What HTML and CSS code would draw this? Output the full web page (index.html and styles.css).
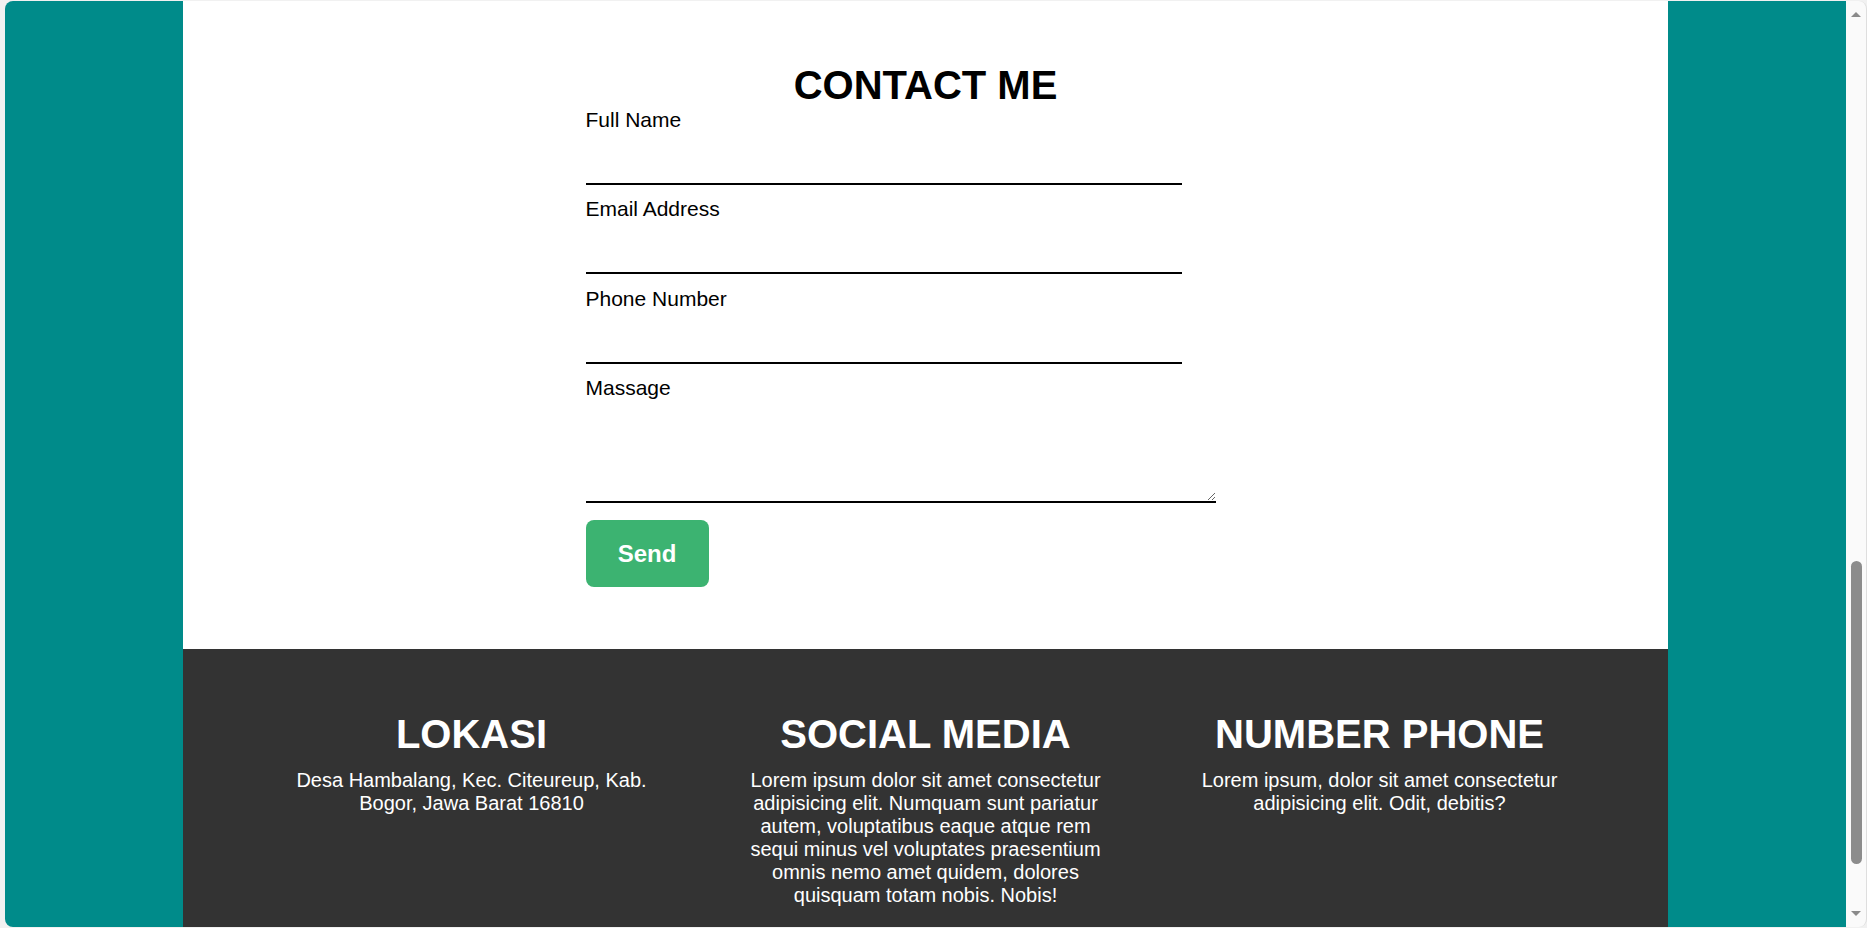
FILE: index.html
```html
<!DOCTYPE html>
<html lang="id">
<head>
<meta charset="utf-8">
<title>Contact Me</title>
<link rel="stylesheet" href="styles.css">
</head>
<body>
<div class="window">
  <div class="viewport">
    <div class="panel">
      <section class="contact">
        <h1 class="contact-title">CONTACT ME</h1>
        <form class="form">
          <div class="field">
            <label class="label" for="name">Full Name</label>
            <input class="input" id="name" type="text">
          </div>
          <div class="field">
            <label class="label" for="email">Email Address</label>
            <input class="input" id="email" type="email">
          </div>
          <div class="field">
            <label class="label" for="phone">Phone Number</label>
            <input class="input" id="phone" type="text">
          </div>
          <div class="field field-msg">
            <label class="label" for="msg">Massage</label>
            <textarea class="textarea" id="msg"></textarea>
          </div>
          <button class="send" type="button">Send</button>
        </form>
      </section>
      <footer class="footer">
        <div class="col">
          <h2 class="col-title">LOKASI</h2>
          <p class="col-text">Desa Hambalang, Kec. Citeureup, Kab. Bogor, Jawa Barat 16810</p>
        </div>
        <div class="col">
          <h2 class="col-title">SOCIAL MEDIA</h2>
          <p class="col-text">Lorem ipsum dolor sit amet consectetur adipisicing elit. Numquam sunt pariatur autem, voluptatibus eaque atque rem sequi minus vel voluptates praesentium omnis nemo amet quidem, dolores quisquam totam nobis. Nobis!</p>
        </div>
        <div class="col">
          <h2 class="col-title">NUMBER PHONE</h2>
          <p class="col-text">Lorem ipsum, dolor sit amet consectetur adipisicing elit. Odit, debitis?</p>
        </div>
      </footer>
    </div>
  </div>
  <div class="scrollbar">
    <span class="arrow-up"></span>
    <span class="thumb"></span>
    <span class="arrow-down"></span>
  </div>
</div>
</body>
</html>
```

FILE: styles.css
```css
* { box-sizing: border-box; }

html, body {
  margin: 0;
  height: 928px;
  overflow: hidden;
}

body {
  background: #f1f1f1;
  font-family: "Liberation Sans", Arial, sans-serif;
}

.window {
  display: flex;
  height: 928px;
  padding: 1px 0 1px 5px;
}

.viewport {
  flex: 1;
  background: #008b8a;
  border-top-left-radius: 8px;
  border-bottom-left-radius: 8px;
  overflow: hidden;
  display: flex;
  justify-content: center;
}

.panel {
  width: 1485px;
  flex: none;
  display: flex;
  flex-direction: column;
}

.contact {
  background: #ffffff;
  padding: 61px 0 62px;
}

.contact-title {
  margin: 0;
  font-size: 40px;
  line-height: 46px;
  font-weight: 700;
  text-align: center;
  color: #000;
}

.form {
  width: 680px;
  margin: -0.5px auto 0;
  display: flex;
  flex-direction: column;
}

.field {
  display: flex;
  flex-direction: column;
  margin-bottom: 12.5px;
}

.field-msg {
  margin-bottom: 17px;
}

.label {
  font-size: 21px;
  line-height: 24px;
  color: #000;
}

.input {
  width: 596px;
  height: 53px;
  border: none;
  border-bottom: 2px solid #000;
  outline: none;
  background: transparent;
  padding: 0;
  font-family: inherit;
  font-size: 18px;
}

.textarea {
  display: block;
  width: 630px;
  height: 103px;
  border: none;
  border-bottom: 2px solid #000;
  outline: none;
  background: transparent;
  padding: 2px;
  font-family: inherit;
  font-size: 18px;
}

.send {
  align-self: flex-start;
  width: 123px;
  height: 67px;
  border: none;
  border-radius: 8px;
  background: #3cb371;
  color: #ffffff;
  font-family: inherit;
  font-size: 24px;
  font-weight: 700;
  padding: 0;
}

.footer {
  flex: 1;
  background: #333333;
  color: #ffffff;
  padding-top: 62px;
  display: flex;
  justify-content: center;
  gap: 94px;
}

.col {
  width: 360px;
  text-align: center;
}

.col-title {
  margin: 0 0 12px;
  font-size: 40px;
  line-height: 46px;
  font-weight: 700;
  white-space: nowrap;
}

.col-text {
  margin: 0;
  font-size: 20px;
  line-height: 23px;
}

.scrollbar {
  width: 21px;
  flex: none;
  background: #fafafa;
  border-right: 1px solid #dedede;
  border-top-right-radius: 8px;
  border-bottom-right-radius: 8px;
  display: flex;
  flex-direction: column;
  align-items: center;
}

.arrow-up {
  margin-top: 11px;
  width: 0;
  height: 0;
  border-left: 5px solid transparent;
  border-right: 5px solid transparent;
  border-bottom: 5px solid #8a8a8a;
}

.thumb {
  margin-top: auto;
  margin-bottom: 47px;
  width: 11px;
  height: 303px;
  border-radius: 6px;
  background: #8c8c8c;
}

.arrow-down {
  margin-bottom: 11px;
  width: 0;
  height: 0;
  border-left: 5px solid transparent;
  border-right: 5px solid transparent;
  border-top: 5px solid #8a8a8a;
}
```
